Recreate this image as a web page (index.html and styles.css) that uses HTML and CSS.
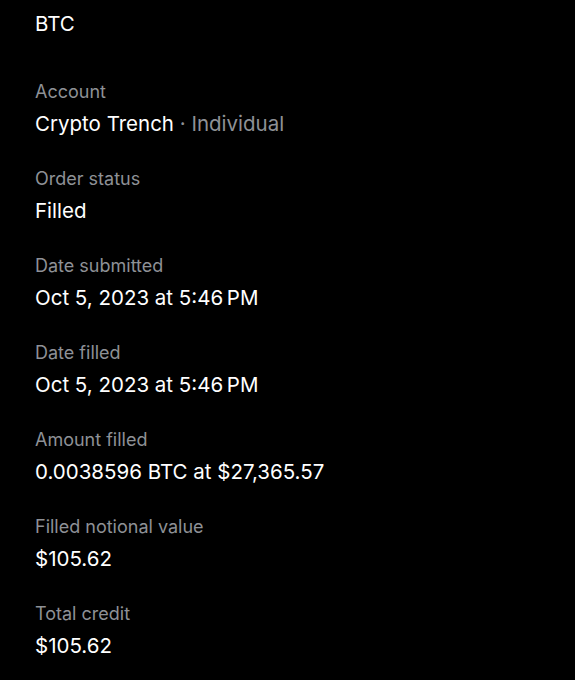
FILE: index.html
```html
<!DOCTYPE html>
<html lang="en">
<head>
    <meta charset="UTF-8">
    <meta name="viewport" content="width=device-width, initial-scale=1.0">
    <title>BTC Order</title>
    <link rel="stylesheet" href="styles.css">
</head>
<body>

    <div class="order-detail">
        <h1 class="order-title">BTC</h1>

        <div class="detail-list">
            <div class="detail-row">
                <div class="detail-label">Account</div>
                <div class="detail-value">Crypto Trench <span class="muted">· Individual</span></div>
            </div>
            <div class="detail-row">
                <div class="detail-label">Order status</div>
                <div class="detail-value">Filled</div>
            </div>
            <div class="detail-row">
                <div class="detail-label">Date submitted</div>
                <div class="detail-value">Oct 5, 2023 at 5:46&#8239;PM</div>
            </div>
            <div class="detail-row">
                <div class="detail-label">Date filled</div>
                <div class="detail-value">Oct 5, 2023 at 5:46&#8239;PM</div>
            </div>
            <div class="detail-row">
                <div class="detail-label">Amount filled</div>
                <div class="detail-value">0.0038596 BTC at $27,365.57</div>
            </div>
            <div class="detail-row">
                <div class="detail-label">Filled notional value</div>
                <div class="detail-value">$105.62</div>
            </div>
            <div class="detail-row">
                <div class="detail-label">Total credit</div>
                <div class="detail-value">$105.62</div>
            </div>
        </div>
    </div>

</body>
</html>
```

FILE: styles.css
```css
body {
    font-family: 'Inter', 'Liberation Sans', sans-serif;
    background-color: #000000;
    color: #ffffff;
    margin: 0;
}

.order-detail {
    padding: 7px 35px 0 35px;
}

.order-title {
    font-size: 20.5px;
    font-weight: 400;
    line-height: 28px;
    margin: 3px 0 42px 0;
}

.detail-list {
    display: flex;
    flex-direction: column;
    gap: 29px;
}

.detail-row {
    display: flex;
    flex-direction: column;
    gap: 6px;
}

.detail-label {
    font-size: 18px;
    line-height: 24px;
    color: #8e9196;
}

.detail-value {
    font-size: 20.5px;
    line-height: 28px;
    color: #ffffff;
}

.muted {
    color: #8e9196;
}
```
